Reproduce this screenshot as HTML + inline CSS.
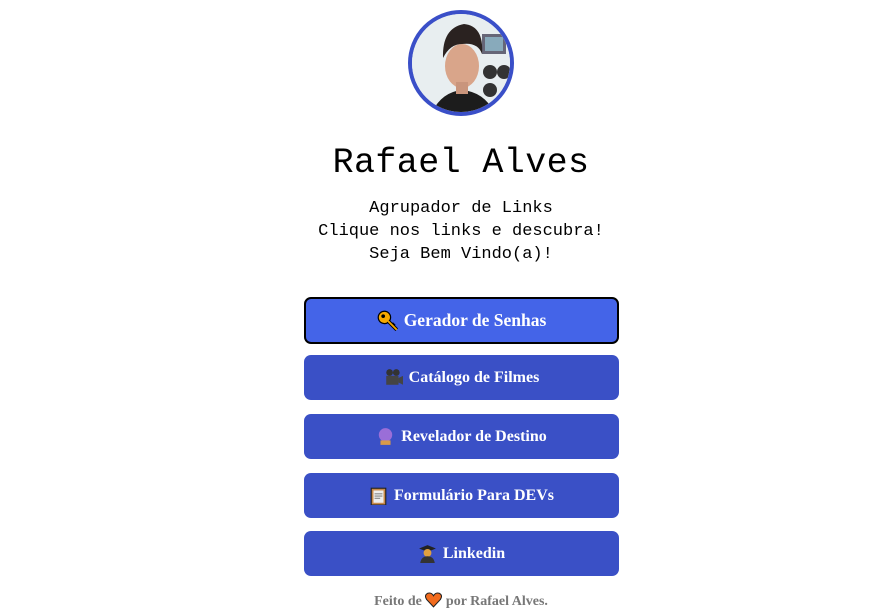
<!DOCTYPE html>
<html><head><meta charset="utf-8"><style>
body{margin:0;width:891px;height:616px;background:#fff;position:relative;overflow:hidden}
.av{position:absolute;left:408px;top:10px;width:98px;height:98px;border:4px solid #3a4fc8;border-radius:50%;overflow:hidden;background:#e9eef2}
h1{position:absolute;left:0;width:922px;top:143px;margin:0;text-align:center;font:35px "Liberation Mono",monospace;letter-spacing:0.4px;color:#000}
.sub{position:absolute;left:0;width:922px;top:197px;text-align:center;font:17px/23px "Liberation Mono",monospace;color:#000}
.b{position:absolute;left:304px;width:315px;height:45px;border-radius:7px;background:#3a50c6;color:#fff;font:bold 16px "Liberation Serif",serif;display:flex;align-items:center;justify-content:center;box-sizing:border-box}
.b1{background:#4464e8;border:2px solid #000;font-size:17.5px;height:47px}
.ic{display:inline-block;width:19px;height:19px;margin-right:6px;vertical-align:middle}
.ft{position:absolute;left:0;width:922px;top:592px;text-align:center;font:bold 14px "Liberation Serif",serif;color:#777}
</style></head><body>
<div class="av"><svg width="98" height="98" viewBox="0 0 98 98">
<rect width="98" height="98" fill="#e8eef0"/>
<rect x="70" y="20" width="24" height="20" fill="#667"/><rect x="73" y="23" width="18" height="14" fill="#8ab"/>
<circle cx="78" cy="58" r="7" fill="#333"/><circle cx="92" cy="58" r="7" fill="#333"/><circle cx="78" cy="76" r="7" fill="#333"/>
<path d="M20 98 Q30 78 50 76 Q72 78 82 98Z" fill="#1c1c1c"/>
<ellipse cx="50" cy="52" rx="17" ry="22" fill="#d9a58a"/>
<path d="M31 44 Q30 14 52 10 Q72 12 70 40 Q66 28 50 30 Q38 30 31 44Z" fill="#2a2220"/>
<rect x="44" y="68" width="12" height="12" fill="#c9957c"/>
</svg></div>
<h1>Rafael Alves</h1>
<div class="sub">Agrupador de Links<br>Clique nos links e descubra!<br>Seja Bem Vindo(a)!</div>
<div class="b b1" style="top:297px"><svg class="ic" viewBox="0 0 17 17" style="width:21px;height:21px"><circle cx="6" cy="6" r="5" fill="#f5a800" stroke="#000"/><circle cx="5" cy="5" r="1.5" fill="#000"/><path d="M9 9 L16 16 M12 13 L14 11" stroke="#000" stroke-width="3"/><path d="M9 9 L16 16" stroke="#f5a800" stroke-width="1.5"/></svg>Gerador de Senhas</div>
<div class="b" style="top:355px"><svg class="ic" viewBox="0 0 17 17"><circle cx="5" cy="4" r="3" fill="#333"/><circle cx="11" cy="4" r="3" fill="#333"/><rect x="2" y="7" width="11" height="8" fill="#444"/><path d="M13 9 L17 7 V15 L13 13Z" fill="#444"/></svg>Catálogo de Filmes</div>
<div class="b" style="top:414px"><svg class="ic" viewBox="0 0 17 17"><circle cx="8.5" cy="7" r="6" fill="#9a6ed8"/><rect x="4" y="12" width="9" height="4" fill="#d79a4a"/></svg>Revelador de Destino</div>
<div class="b" style="top:473px"><svg class="ic" viewBox="0 0 17 17"><rect x="2" y="2" width="13" height="15" fill="#c98a4a" stroke="#222"/><rect x="4" y="4" width="9" height="11" fill="#eee"/><path d="M5 7H12M5 9H12M5 11H10" stroke="#888"/></svg>Formulário Para DEVs</div>
<div class="b" style="top:531px"><svg class="ic" viewBox="0 0 17 17"><path d="M1 4 L8.5 1 L16 4 L8.5 7Z" fill="#222"/><circle cx="8.5" cy="8" r="3.5" fill="#e0a040"/><path d="M2 17 Q3 11 8.5 11 Q14 11 15 17Z" fill="#333"/></svg>Linkedin</div>
<div class="ft">Feito de <svg width="17" height="16" viewBox="0 0 16 15" style="vertical-align:-3px"><path d="M8 14 L1.5 7 Q-1 3 2.5 1.2 Q6 0 8 3.5 Q10 0 13.5 1.2 Q17 3 14.5 7Z" fill="#f26b1d" stroke="#222" stroke-width="1"/></svg> por Rafael Alves.</div>
</body></html>
